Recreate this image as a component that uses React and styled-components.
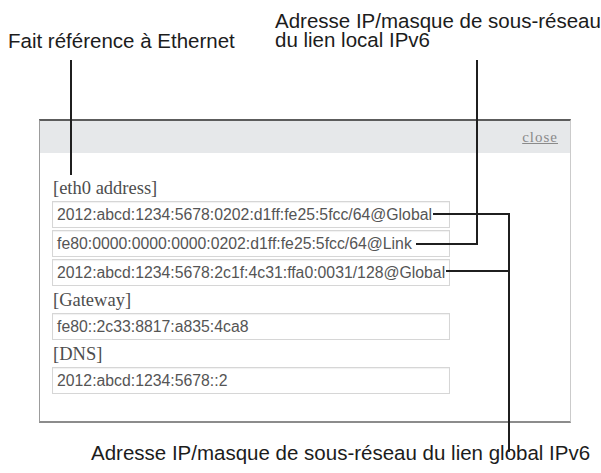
import React from 'react';
import styled, { createGlobalStyle } from 'styled-components';

const GlobalStyle = createGlobalStyle`
  html, body {
    margin: 0;
    padding: 0;
    background: #ffffff;
  }
`;

const Figure = styled.div`
  position: relative;
  width: 601px;
  height: 473px;
  box-sizing: border-box;
  padding: 119px 0 0 39px;
  background: #ffffff;
  overflow: hidden;
`;

const Panel = styled.div`
  width: 532px;
  box-sizing: border-box;
  background: #ffffff;
  border-top: 2px solid #5c5c5c;
  border-left: 1px solid #9c9c9c;
  border-right: 1px solid #cbcbcb;
  border-bottom: 2px solid #8c8c8c;
`;

const Header = styled.div`
  height: 32px;
  display: flex;
  align-items: center;
  justify-content: flex-end;
  padding-right: 12px;
  background: #e6e8ea;
`;

const CloseLink = styled.a`
  font-family: 'Liberation Serif', 'Times New Roman', serif;
  font-size: 15px;
  letter-spacing: 1px;
  color: #8a8a8a;
  text-decoration: underline;
  cursor: pointer;
`;

const Body = styled.div`
  padding: 23px 0 25px 12px;
`;

const Label = styled.div`
  height: 25px;
  line-height: 25px;
  padding-left: 1px;
  font-family: 'Liberation Serif', 'Times New Roman', serif;
  font-size: 18.5px;
  color: #4d4d4d;
`;

const Field = styled.div`
  width: 398px;
  height: 27px;
  box-sizing: border-box;
  margin-bottom: 2px;
  padding: 0 4px;
  border: 1px solid #d6d6d6;
  box-shadow: inset 0 1px 1px rgba(0, 0, 0, 0.06);
  font-family: 'Liberation Sans', Arial, sans-serif;
  font-size: 15.8px;
  line-height: 25px;
  color: #555555;
  white-space: nowrap;
  overflow: hidden;
`;

const Callout = styled.div`
  position: absolute;
  top: ${p => p.$top}px;
  left: ${p => p.$left}px;
  font-family: 'Liberation Sans', Arial, Helvetica, sans-serif;
  font-size: 20.5px;
  line-height: ${p => p.$lh || 20}px;
  color: #1c1c1c;
  white-space: nowrap;
`;

const Leaders = styled.svg`
  position: absolute;
  top: 0;
  left: 0;
  pointer-events: none;
`;

const groups = [
  {
    label: '[eth0 address]',
    values: [
      '2012:abcd:1234:5678:0202:d1ff:fe25:5fcc/64@Global',
      'fe80:0000:0000:0000:0202:d1ff:fe25:5fcc/64@Link',
      '2012:abcd:1234:5678:2c1f:4c31:ffa0:0031/128@Global',
    ],
  },
  { label: '[Gateway]', values: ['fe80::2c33:8817:a835:4ca8'] },
  { label: '[DNS]', values: ['2012:abcd:1234:5678::2'] },
];

const App = () => (
  <>
    <GlobalStyle />
    <Figure>
      <Panel>
        <Header>
          <CloseLink>close</CloseLink>
        </Header>
        <Body>
          {groups.map(g => (
            <React.Fragment key={g.label}>
              <Label>{g.label}</Label>
              {g.values.map(v => (
                <Field key={v}>{v}</Field>
              ))}
            </React.Fragment>
          ))}
        </Body>
      </Panel>

      <Callout $top={31} $left={8}>Fait référence à Ethernet</Callout>
      <Callout $top={12} $left={275} $lh={18.7}>
        Adresse IP/masque de sous-réseau
        <br />
        du lien local IPv6
      </Callout>
      <Callout $top={443} $left={91}>
        Adresse IP/masque de sous-réseau du lien global IPv6
      </Callout>

      <Leaders width="601" height="473" viewBox="0 0 601 473">
        <g fill="none" stroke="#1f1f1f" strokeWidth="2">
          <path d="M71 60 V175" />
          <path d="M477 60 V244 H416" />
          <path d="M433 214 H509 V452" />
          <path d="M446 271 H509" />
        </g>
      </Leaders>
    </Figure>
  </>
);

export default App;
